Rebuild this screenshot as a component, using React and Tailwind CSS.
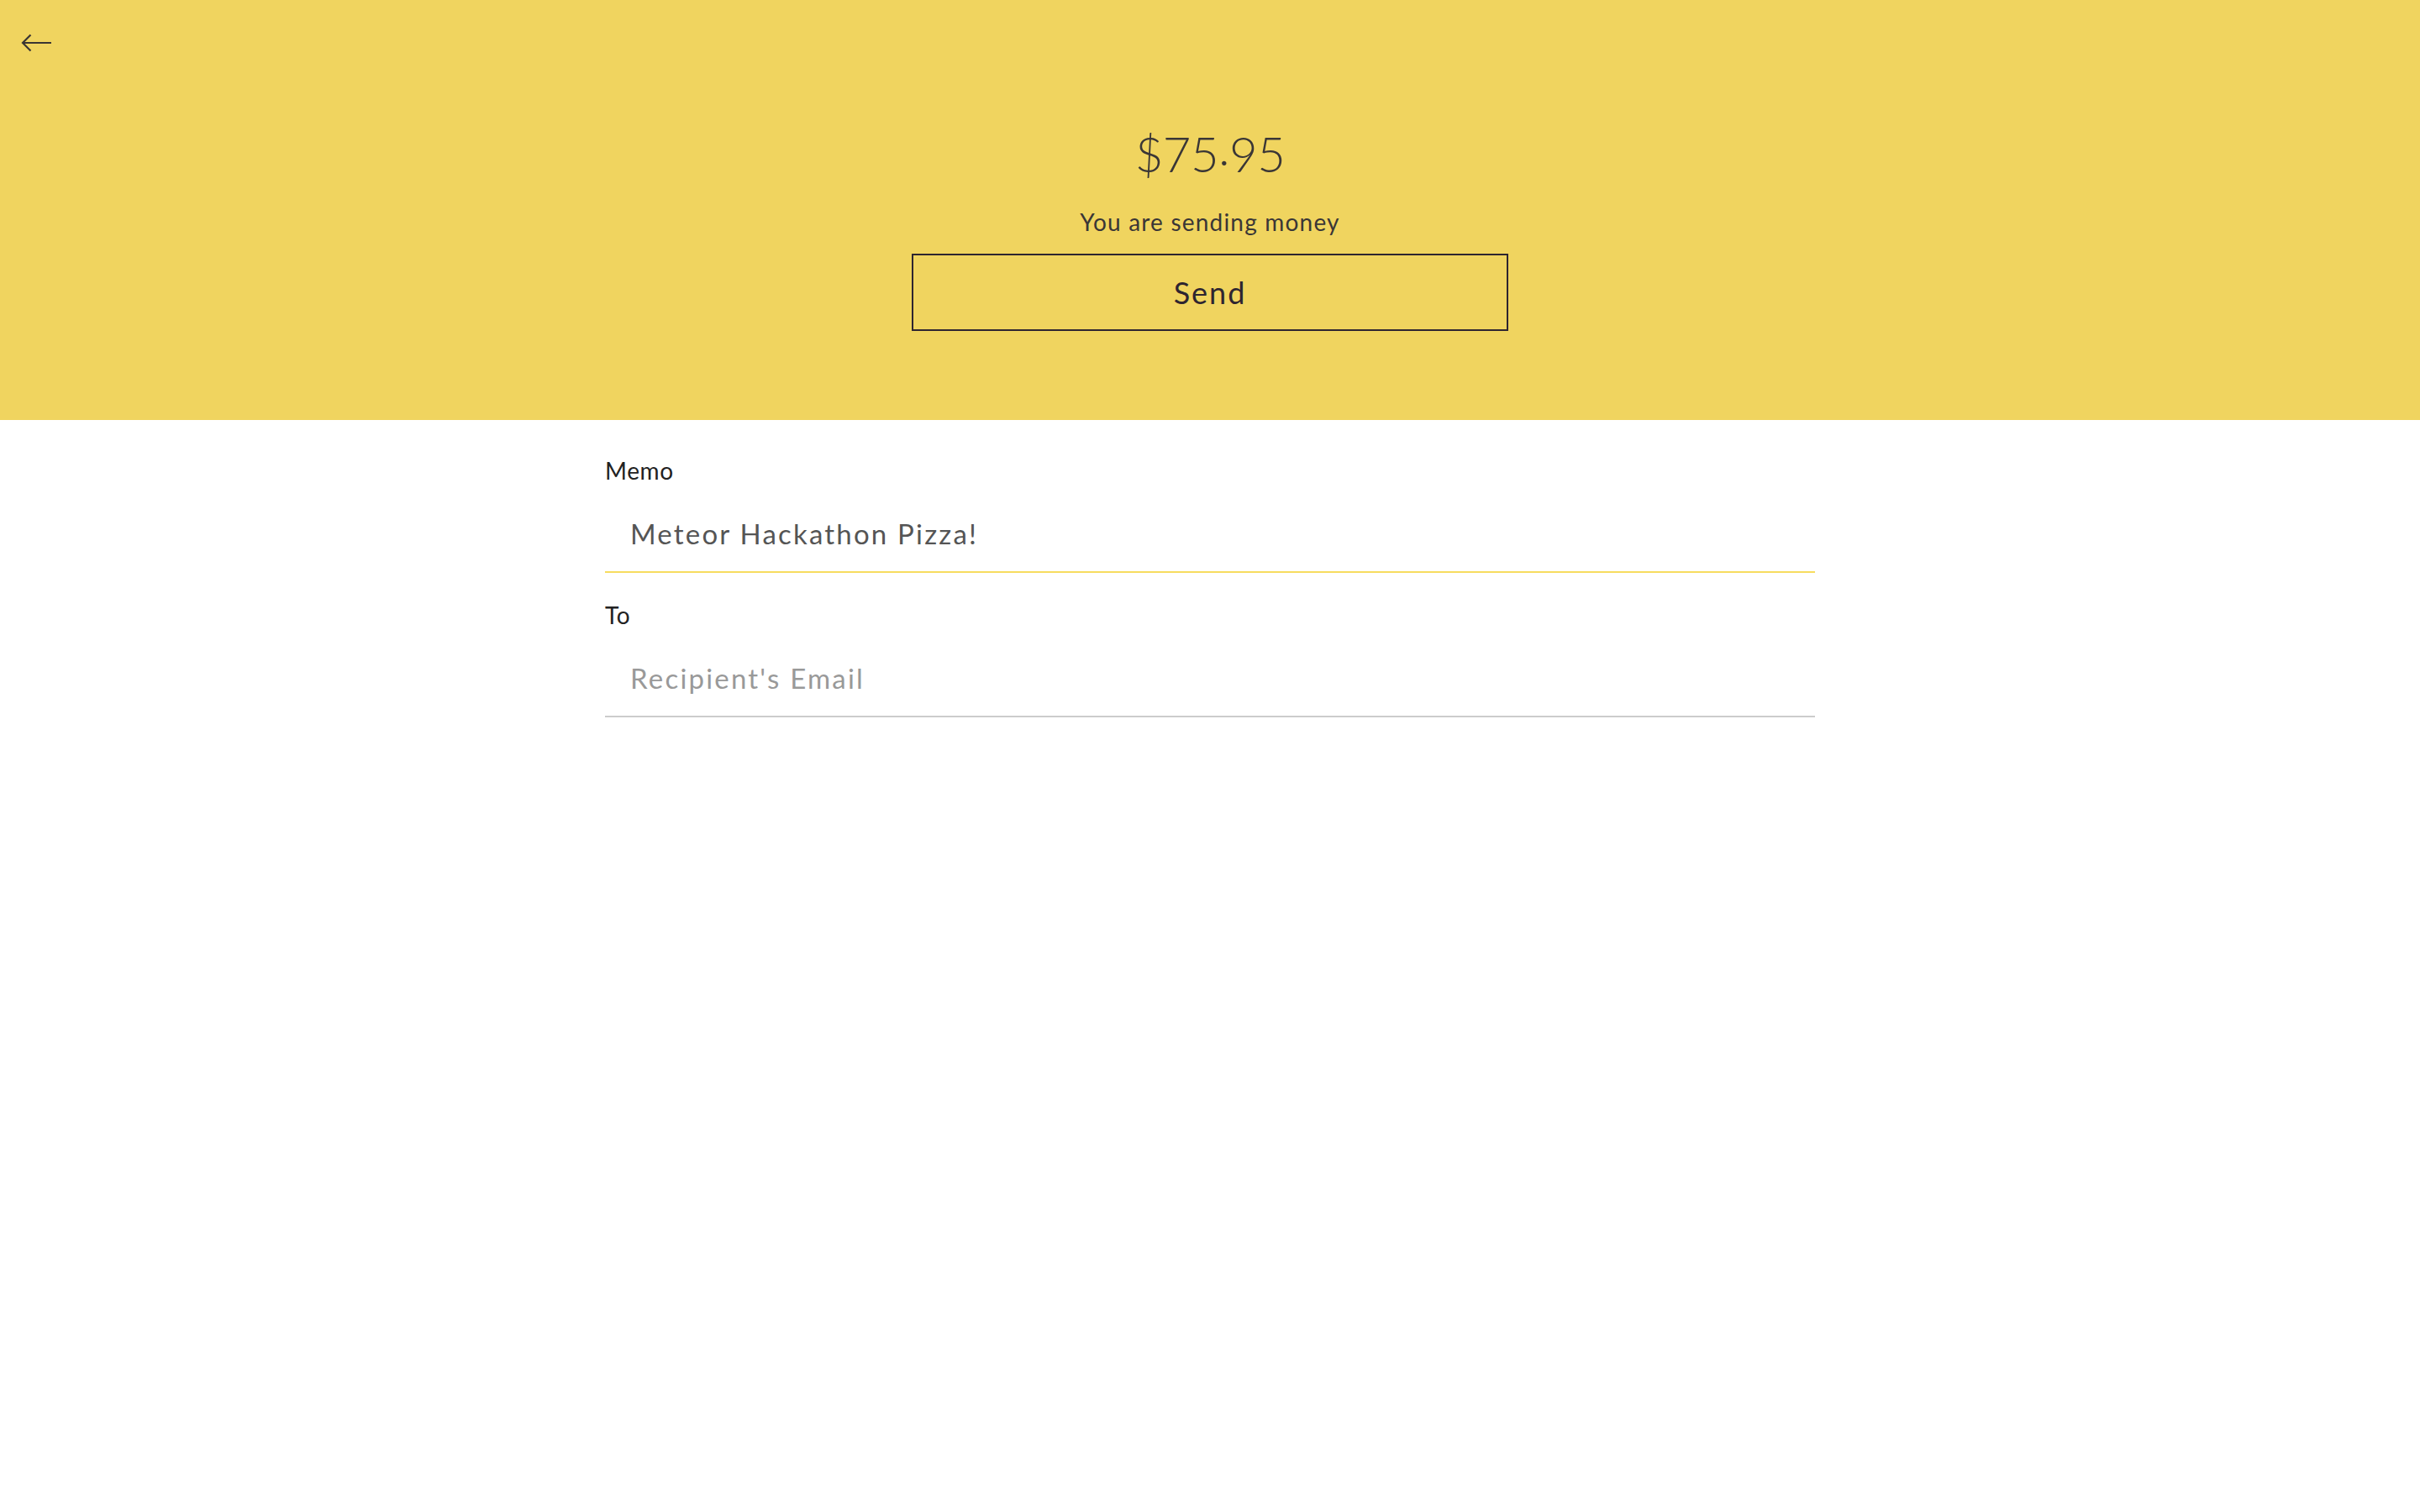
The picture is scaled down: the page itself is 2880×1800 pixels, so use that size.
import React, { useState } from "react";

const font = { fontFamily: "Lato, 'Open Sans', sans-serif" };

function BackArrow() {
  return (
    <svg width="37" height="22" viewBox="0 0 37 22" fill="none" stroke="#3a3533" strokeWidth="2.2">
      <path d="M36 11H2" />
      <path d="M11.5 1.5L2 11l9.5 9.5" />
    </svg>
  );
}

function Field({ label, value, placeholder, focused }) {
  const [v, setV] = useState(value || "");
  return (
    <div>
      <label className="block text-[28px] leading-none tracking-[0.6px] text-[#222]">{label}</label>
      <input
        className={
          "block w-full pl-[30px] pt-[41px] pb-[25px] text-[33px] leading-[40px] tracking-[2.2px] text-[#555] placeholder:text-[#999] bg-transparent outline-none border-b-2 " +
          (focused ? "border-[#f7dc5f]" : "border-[#cccccc]")
        }
        style={font}
        value={v}
        placeholder={placeholder}
        onChange={(e) => setV(e.target.value)}
      />
    </div>
  );
}

export default function App() {
  return (
    <div className="min-h-screen bg-white" style={font}>
      {/* Header */}
      <div className="relative bg-[#f0d45f] h-[500px] flex flex-col items-center text-[#3a3636]">
        <button className="absolute left-[25px] top-[40px]">
          <BackArrow />
        </button>

        <div className="mt-[154px] text-[58px] leading-none font-light tracking-[-0.5px]">
          $75<span className="relative -top-[8px]">.</span>95
        </div>
        <div className="mt-[38px] text-[28px] leading-none tracking-[1.2px]">You are sending money</div>

        <button className="mt-[24px] w-[710px] h-[92px] border-2 border-[#2e2530] flex items-center justify-center text-[36px] leading-none tracking-[2px] text-[#2e2530]">
          Send
        </button>
      </div>

      {/* Form */}
      <div className="w-[1440px] mx-auto pt-[46px] flex flex-col gap-[36px]">
        <Field label="Memo" value="Meteor Hackathon Pizza!" focused />
        <Field label="To" placeholder="Recipient's Email" />
      </div>
    </div>
  );
}
